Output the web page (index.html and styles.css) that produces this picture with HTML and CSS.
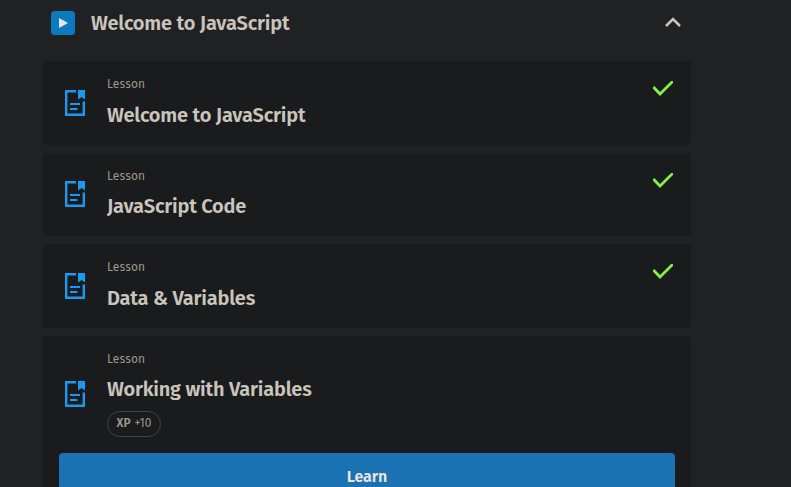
FILE: index.html
```html
<!DOCTYPE html>
<html lang="en">
<head>
<meta charset="utf-8">
<title>Welcome to JavaScript</title>
<link rel="stylesheet" href="styles.css">
</head>
<body>
<svg class="defs" aria-hidden="true">
  <symbol id="doc" viewBox="0 0 20 26">
    <path d="M11 1.2H1.2V24.8H18.8V11.5" fill="none" stroke="currentColor" stroke-width="2.4"/>
    <path d="M13 0H20V9.5L16.5 7L13 9.5Z" fill="currentColor"/>
    <path d="M5 14H15M5 19H12.5" stroke="currentColor" stroke-width="2.2"/>
  </symbol>
  <symbol id="check" viewBox="0 0 20 15">
    <path d="M1.3 7L7 12.9L18.8 1.3" fill="none" stroke="currentColor" stroke-width="2.8" stroke-linecap="square"/>
  </symbol>
</svg>
<main class="course">
  <header class="section-head">
    <svg class="play" viewBox="0 0 24 24"><rect width="24" height="24" rx="3.5"/><path d="M8 7L17 12L8 17Z"/></svg>
    <h1 class="title section-title">Welcome to JavaScript</h1>
    <svg class="chevron" viewBox="0 0 16 10"><path d="M1 9L8 2L15 9"/></svg>
  </header>
  <section class="lessons">
    <article class="card">
      <div class="row">
        <svg class="doc"><use href="#doc"/></svg>
        <div class="info"><p class="kind">Lesson</p><h2 class="title">Welcome to JavaScript</h2></div>
        <svg class="check"><use href="#check"/></svg>
      </div>
    </article>
    <article class="card">
      <div class="row">
        <svg class="doc"><use href="#doc"/></svg>
        <div class="info"><p class="kind">Lesson</p><h2 class="title">JavaScript Code</h2></div>
        <svg class="check"><use href="#check"/></svg>
      </div>
    </article>
    <article class="card">
      <div class="row">
        <svg class="doc"><use href="#doc"/></svg>
        <div class="info"><p class="kind">Lesson</p><h2 class="title">Data &amp; Variables</h2></div>
        <svg class="check"><use href="#check"/></svg>
      </div>
    </article>
    <article class="card">
      <div class="row row-open">
        <svg class="doc"><use href="#doc"/></svg>
        <div class="info"><p class="kind">Lesson</p><h2 class="title">Working with Variables</h2>
          <div class="xp"><b>XP</b><span>+10</span></div></div>
      </div>
      <button class="learn">Learn</button>
    </article>
  </section>
</main>
</body>
</html>
```
FILE: styles.css
```css
* { box-sizing: border-box; }
html { overflow: hidden; }
body {
  margin: 0;
  height: 487px;
  overflow: hidden;
  background: #202123;
  color: #c9c4bc;
  font-family: "Fira Sans", "Noto Sans", sans-serif;
}
h1, h2, p { margin: 0; }
.defs { display: none; }
.course { width: 648px; margin-left: 43px; }
.section-head {
  display: flex;
  align-items: center;
  height: 61px;
  padding: 0 10px 15px 8px;
}
.play { width: 24px; height: 24px; margin-right: 16px; }
.play rect { fill: #0b7abf; }
.play path { fill: #e8e6e3; }
.chevron { width: 16px; height: 10px; margin: 0 0 2px auto; }
.chevron path { fill: none; stroke: #c9c4bc; stroke-width: 2.6; }
.title {
  font-size: 20px;
  font-weight: 600;
  line-height: 30px;
  letter-spacing: -0.2px;
  white-space: nowrap;
}
.lessons { display: flex; flex-direction: column; gap: 8px; }
.card { border-radius: 4px; background: #1a1b1d; }
.row {
  display: flex;
  align-items: center;
  height: 83.5px;
  padding: 0 18px 0 22px;
}
.info { margin-bottom: 0.6px; }
.row-open { height: 117px; }
.row-open .info { margin-bottom: 1px; }
.doc { width: 20px; height: 26px; margin-right: 22px; color: #189af3; }
.kind {
  font-size: 12px;
  line-height: 18px;
  margin-bottom: 6.5px;
  letter-spacing: 0.15px;
  color: #9f978b;
}
.check {
  width: 20px;
  height: 15px;
  margin: 20px 0 0 auto;
  align-self: flex-start;
  overflow: visible;
  color: #85f046;
}
.xp {
  display: flex;
  align-items: center;
  justify-content: center;
  gap: 4px;
  width: 54px;
  height: 26px;
  margin-top: 7px;
  padding-bottom: 2px;
  border: 1px solid #414345;
  border-radius: 13px;
  font-size: 12px;
  letter-spacing: -0.05px;
  color: #9f978b;
}
.xp b { font-weight: 600; }
.learn {
  display: block;
  width: 616px;
  height: 48px;
  margin: 0 auto 16px;
  padding: 0;
  border: 0;
  border-radius: 4px;
  background: #1b72b2;
  color: #e8e6e3;
  font: 600 16px/48px "Fira Sans", "Noto Sans", sans-serif;
  letter-spacing: -0.1px;
}
```
